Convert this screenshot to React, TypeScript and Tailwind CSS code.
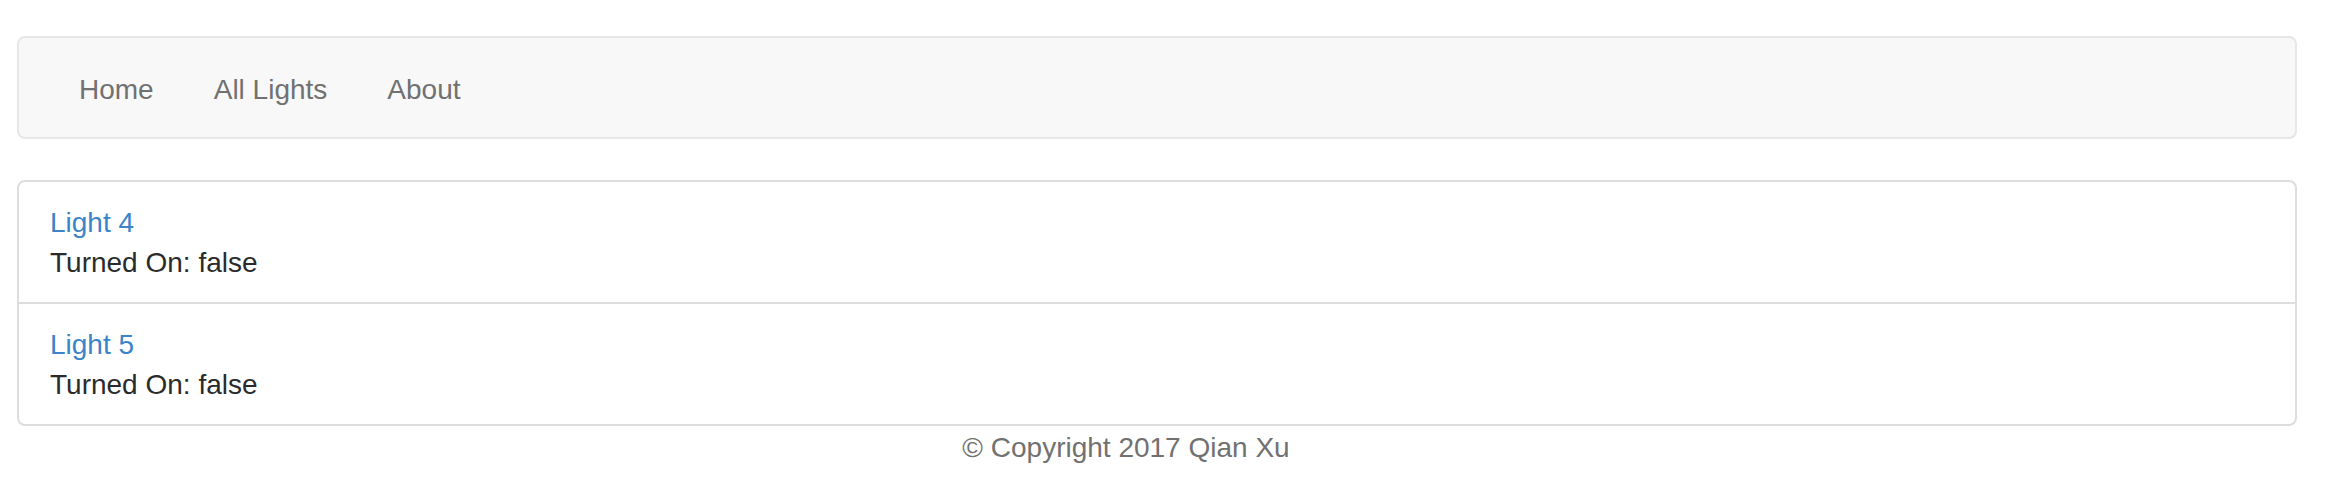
const lights = [
  { name: 'Light 4', on: false },
  { name: 'Light 5', on: false },
];

const navLinks = ['Home', 'All Lights', 'About'];

export default function App() {
  return (
    <div
      className="h-[478px] overflow-hidden bg-white pt-[36px] text-[28px] leading-[40px] text-[#2b2b2b]"
      style={{ fontFamily: '"Liberation Sans", Arial, Helvetica, sans-serif' }}
    >
      <nav className="ml-[17px] flex h-[103px] w-[2280px] items-center rounded-[8px] border-2 border-[#e7e7e7] bg-[#f8f8f8] pl-[30px]">
        <ul className="flex">
          {navLinks.map((link) => (
            <li key={link}>
              <a href="#" className="block px-[30px] pt-[31px] pb-[27px] text-[#717171]">
                {link}
              </a>
            </li>
          ))}
        </ul>
      </nav>

      <div className="ml-[17px] mt-[41px] w-[2280px] rounded-[8px] border-2 border-[#ddd]">
        {lights.map((light, i) => (
          <div
            key={light.name}
            className={i > 0 ? 'border-t-2 border-[#ddd] px-[31px] pt-[21px] pb-[19px]' : 'px-[31px] pt-[21px] pb-[19px]'}
          >
            <a href="#" className="block text-[#3b84c8]">
              {light.name}
            </a>
            <div>Turned On: {String(light.on)}</div>
          </div>
        ))}
      </div>

      <footer className="pt-[2px] pr-[84px] text-center text-[#717171]">© Copyright 2017 Qian Xu</footer>
    </div>
  );
}
